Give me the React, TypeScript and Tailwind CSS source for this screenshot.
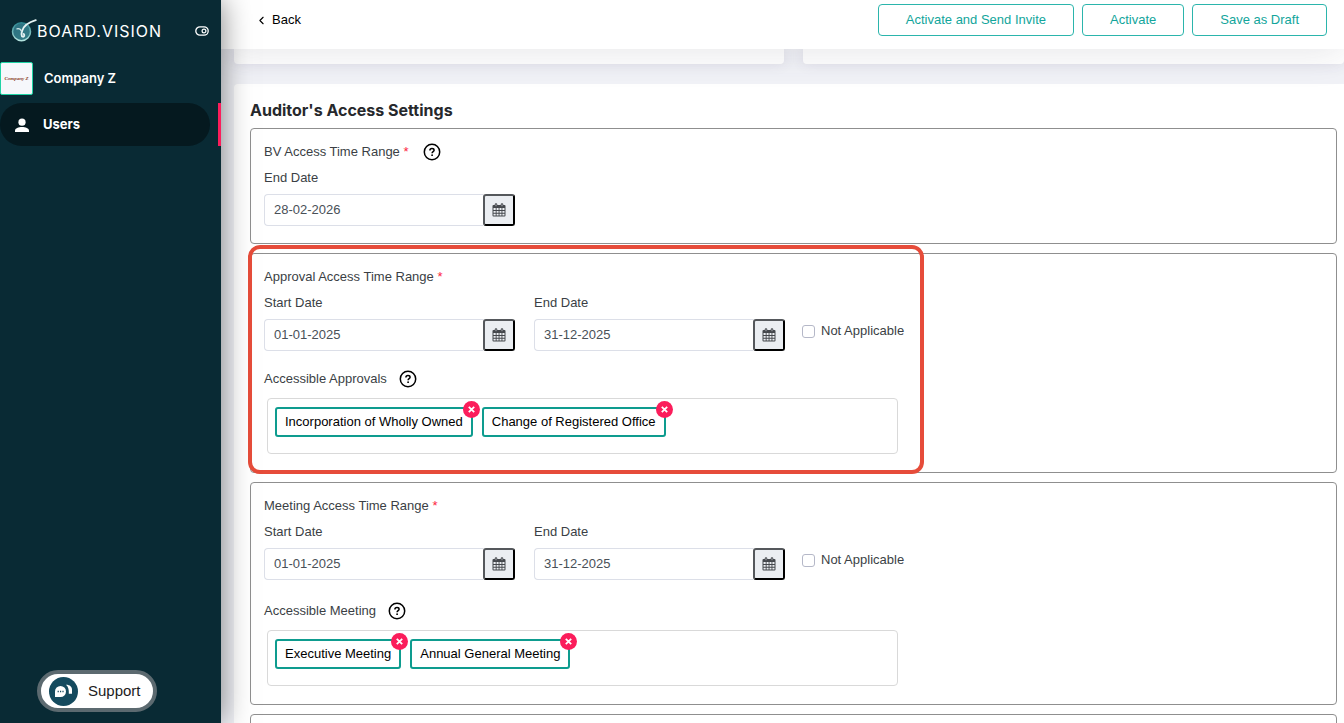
import { useState } from 'react';
import { ChevronLeft } from 'lucide-react';

type Period = {
  id: string;
  title: string;
  listLabel: string;
  listSpacing: string;
  start: string;
  end: string;
  items: string[];
};

const periods: Period[] = [
  {
    id: 'approval',
    title: 'Approval Access Time Range',
    listLabel: 'Accessible Approvals',
    listSpacing: 'mt-[18px]',
    start: '01-01-2025',
    end: '31-12-2025',
    items: ['Incorporation of Wholly Owned', 'Change of Registered Office'],
  },
  {
    id: 'meeting',
    title: 'Meeting Access Time Range',
    listLabel: 'Accessible Meeting',
    listSpacing: 'mt-[21px]',
    start: '01-01-2025',
    end: '31-12-2025',
    items: ['Executive Meeting', 'Annual General Meeting'],
  },
];

const actions = ['Activate and Send Invite', 'Activate', 'Save as Draft'];

function Logo() {
  return (
    <svg width="26" height="24" viewBox="0 0 26 24" aria-hidden="true">
      <defs>
        <linearGradient id="logo-disc" x1="0" y1="0" x2="1" y2="1">
          <stop offset="0" stopColor="#2b6f80" />
          <stop offset="1" stopColor="#357f88" />
        </linearGradient>
        <linearGradient id="logo-rim" x1="0" y1="0" x2="0" y2="1">
          <stop offset="0" stopColor="#2c8791" />
          <stop offset="1" stopColor="#b4e4df" />
        </linearGradient>
      </defs>
      <circle cx="10.500" cy="12.700" r="9" fill="url(#logo-disc)" stroke="url(#logo-rim)" strokeWidth="1.500" />
      <path d="M24.800 1.200C18.500 3 13 6.800 11.300 11.500c-1 2.800-1.200 5.800.4 6.200 1.500.3 2.200-1.600 1-2.800" fill="none" stroke="#e6f3f3" strokeWidth="1.800" strokeLinecap="round" />
      <path d="M6 9.800c2-.4 3.800.6 4.600 2.600" fill="none" stroke="#cfe6e8" strokeWidth="1.300" strokeLinecap="round" />
    </svg>
  );
}

function CalendarIcon() {
  return (
    <svg width="14" height="14" viewBox="0 0 14 14" fill="none" aria-hidden="true">
      <rect x="0.500" y="2" width="13" height="11.500" rx="1" fill="#45484d" />
      <path
        d="M1.500 5h2.200v2H1.500zM4.600 5h2v2h-2zM7.500 5h2v2h-2zM10.400 5h2.100v2h-2.100zM1.500 7.900h2.200v1.900H1.500zM4.600 7.900h2v1.900h-2zM7.500 7.900h2v1.900h-2zM10.400 7.900h2.100v1.900h-2.100zM1.500 10.700h2.200v1.800H1.500zM4.600 10.700h2v1.800h-2zM7.500 10.700h2v1.800h-2zM10.400 10.700h2.100v1.800h-2.100z"
        fill="#ebeef2"
      />
      <path d="M4 1.500v1.500M10 1.500v1.500" stroke="#45484d" strokeWidth="2.600" strokeLinecap="round" />
      <path d="M4 1.300v1.900M10 1.300v1.900" stroke="#c9ccd1" strokeWidth="0.800" />
    </svg>
  );
}

function HelpButton({ label }: { label: string }) {
  return (
    <button type="button" aria-label={label} className="text-black">
      <svg width="18" height="18" viewBox="0 0 18 18" fill="none" stroke="currentColor" aria-hidden="true">
        <circle cx="9" cy="9" r="7.700" strokeWidth="1.500" />
        <path d="M6.900 7.400c0-1.200.9-1.900 2.100-1.900s2.100.7 2.100 1.700c0 1.400-2 1.500-2 3" strokeWidth="1.500" />
        <circle cx="9.100" cy="12.200" r="0.900" fill="currentColor" stroke="none" />
      </svg>
    </button>
  );
}

function DateField({ id, label, value }: { id: string; label: string; value: string }) {
  return (
    <div className="w-[251px]">
      <label htmlFor={id} className="block leading-5">{label}</label>
      <div className="mt-[6px] flex h-8">
        <input
          id={id}
          type="text"
          defaultValue={value}
          className="min-w-0 flex-1 rounded-l border border-r-0 border-[#dcdfe8] bg-white px-[9px] text-[#495057] outline-none"
        />
        <button
          type="button"
          aria-label={`Pick ${label}`}
          className="flex w-8 items-center justify-center rounded-[3px] border-2 border-t-[#55585c] border-r-black border-b-black border-l-[#55585c] bg-[#ebeef2]"
        >
          <CalendarIcon />
        </button>
      </div>
    </div>
  );
}

function Tag({ text, onRemove }: { text: string; onRemove: () => void }) {
  return (
    <span className="relative flex h-[30px] items-center rounded-[3px] border-2 border-[#0e9c8f] bg-white px-2 text-black">
      {text}
      <button
        type="button"
        aria-label={`Remove ${text}`}
        onClick={onRemove}
        className="absolute -top-2 -right-[9px] flex size-[17px] items-center justify-center rounded-full bg-[#fb1d5b]"
      >
        <svg width="7" height="7" viewBox="0 0 7 7" stroke="white" strokeWidth="1.800" aria-hidden="true">
          <path d="M0.800 0.800l5.400 5.400M6.200 0.800L0.800 6.200" />
        </svg>
      </button>
    </span>
  );
}

function PeriodPanel({ period, highlighted = false }: { period: Period; highlighted?: boolean }) {
  const [items, setItems] = useState(period.items);

  return (
    <fieldset className="relative rounded border border-[#8f8f8f] px-[13px] pt-[13px] pb-[18px]">
      {highlighted && (
        <div className="pointer-events-none absolute -top-[9px] -bottom-[2px] -left-[3px] w-[676px] rounded-xl border-4 border-[#e64c3a]" />
      )}
      <div className="leading-5">{period.title} <span className="text-[#fd1d3f]">*</span></div>
      <div className="mt-[6px] flex">
        <DateField id={`${period.id}-start`} label="Start Date" value={period.start} />
        <div className="ml-[19px]">
          <DateField id={`${period.id}-end`} label="End Date" value={period.end} />
        </div>
        <label className="mt-7 ml-[17px] flex h-5 items-center gap-[6px]">
          <input type="checkbox" className="size-[13px] appearance-none rounded-[3px] border border-[#b5b8c8] bg-white checked:bg-[#0e9c8f]" />
          Not Applicable
        </label>
      </div>
      <div className={`flex items-center gap-3 leading-5 ${period.listSpacing}`}>
        {period.listLabel}
        <HelpButton label={`About ${period.listLabel}`} />
      </div>
      <div className="mt-[9px] ml-[3px] flex h-14 w-[631px] items-start gap-[9px] rounded border border-[#d9d9d9] px-[7px] pt-2">
        {items.map((item) => (
          <Tag key={item} text={item} onRemove={() => setItems(items.filter((i) => i !== item))} />
        ))}
      </div>
    </fieldset>
  );
}

function Sidebar() {
  return (
    <aside className="relative z-30 flex w-[221px] shrink-0 flex-col bg-[#092a34] text-white shadow-[0_0_28px_rgba(0,0,0,0.5)]">
      <div className="flex h-[62px] items-center pr-3 pl-[11px]">
        <Logo />
        <span className="flex-1 font-['Inter',sans-serif] text-base tracking-[1px]">BOARD.VISION</span>
        <button type="button" aria-label="Collapse menu">
          <svg width="14" height="10" viewBox="0 0 14 10" fill="none" stroke="white" aria-hidden="true">
            <rect x="0.800" y="0.800" width="12.400" height="8.400" rx="4.200" strokeWidth="1.300" />
            <circle cx="9" cy="5" r="1.900" strokeWidth="1.200" />
          </svg>
        </button>
      </div>
      <div className="flex items-center gap-[11px]">
        <span className="flex size-[33px] items-center justify-center rounded-[2px] border border-[#1fd3a5] bg-[#f6f7fb] font-['Liberation_Serif',serif] text-[5px] font-bold text-[#8a3b25] italic">
          Company Z
        </span>
        <span className="font-['Inter',sans-serif] text-[13px] font-semibold">Company Z</span>
      </div>
      <nav className="mt-2 flex justify-between">
        <a href="#users" className="flex h-[43px] w-[210px] items-center gap-[14px] rounded-full bg-[#05191f] pl-[15px] font-['Inter',sans-serif] text-[13px] font-bold">
          <svg width="14" height="14" viewBox="0 0 14 14" fill="white" aria-hidden="true">
            <circle cx="7" cy="4.200" r="3.600" />
            <path d="M0 14v-1.600C0 10.300 3.500 9 7 9s7 1.300 7 3.400V14z" />
          </svg>
          Users
        </a>
        <span className="w-[3px] bg-[#fb1d5b]" />
      </nav>
      <button type="button" className="mt-auto mb-[11px] ml-[37px] flex h-[42px] w-[120px] items-center gap-[10px] rounded-full border-4 border-[#5c6a70] bg-white pl-2 text-[15px] text-[#1c1c1c]">
        <span className="flex size-[29px] items-center justify-center rounded-full bg-[#144a5e]">
          <svg width="18" height="14" viewBox="0 0 18 14" aria-hidden="true">
            <path d="M0 13V7.500a5.500 5.500 0 1 1 5.500 5.500z" fill="white" />
            <path d="M11 0.800c4 0 6 2.200 6 5v4h-3.200C14 6 13.500 3 11 0.800z" fill="white" />
            <path d="M2.600 7.500h1.200M5 7.500h1.200M7.400 7.500h1.200" stroke="#144a5e" strokeWidth="1.300" />
          </svg>
        </span>
        Support
      </button>
    </aside>
  );
}

export default function App() {
  return (
    <div className="flex h-screen overflow-hidden bg-[#f1f2f7] font-['Liberation_Sans',Arial,sans-serif] text-[13px] text-[#3b3f45]">
      <Sidebar />
      <div className="flex min-w-0 flex-1 flex-col">
        <header className="relative z-20 flex h-[49px] shrink-0 items-start justify-between bg-white pt-1 pr-[17px] pl-[34px] shadow-[0_0_40px_rgba(60,63,80,0.15)]">
          <a href="#back" className="flex h-8 items-center gap-1 text-black">
            <ChevronLeft size={13} />
            Back
          </a>
          <div className="flex gap-2">
            {actions.map((action) => (
              <button key={action} type="button" className="h-8 rounded border border-[#2bb5ac] px-[27px] text-[#12a59b]">
                {action}
              </button>
            ))}
          </div>
        </header>
        <main className="min-h-0 flex-1 overflow-hidden pl-[13px]">
          <div className="flex gap-[19px]">
            <div className="h-[15px] w-[550px] rounded-b bg-white shadow-[0_0_13px_rgba(82,63,105,0.1)]" />
            <div className="h-[15px] flex-1 rounded-b bg-white shadow-[0_0_13px_rgba(82,63,105,0.1)]" />
          </div>
          <section className="mt-5 rounded-tl bg-white pt-[14px] pr-[7px] pl-4">
            <h1 className="font-['Inter',sans-serif] text-base leading-6 font-bold text-[#26282c]">Auditor's Access Settings</h1>
            <div className="mt-[6px] flex flex-col gap-[9px]">
              <fieldset className="rounded border border-[#8f8f8f] px-[13px] pt-[13px] pb-[17px]">
                <div className="flex items-center gap-[14px] leading-5">
                  <div>BV Access Time Range <span className="text-[#fd1d3f]">*</span></div>
                  <HelpButton label="About BV Access Time Range" />
                </div>
                <div className="mt-[6px]">
                  <DateField id="bv-end" label="End Date" value="28-02-2026" />
                </div>
              </fieldset>
              <PeriodPanel period={periods[0]} highlighted />
              <PeriodPanel period={periods[1]} />
              <fieldset className="h-16 rounded border border-[#8f8f8f]" />
            </div>
          </section>
        </main>
      </div>
    </div>
  );
}
